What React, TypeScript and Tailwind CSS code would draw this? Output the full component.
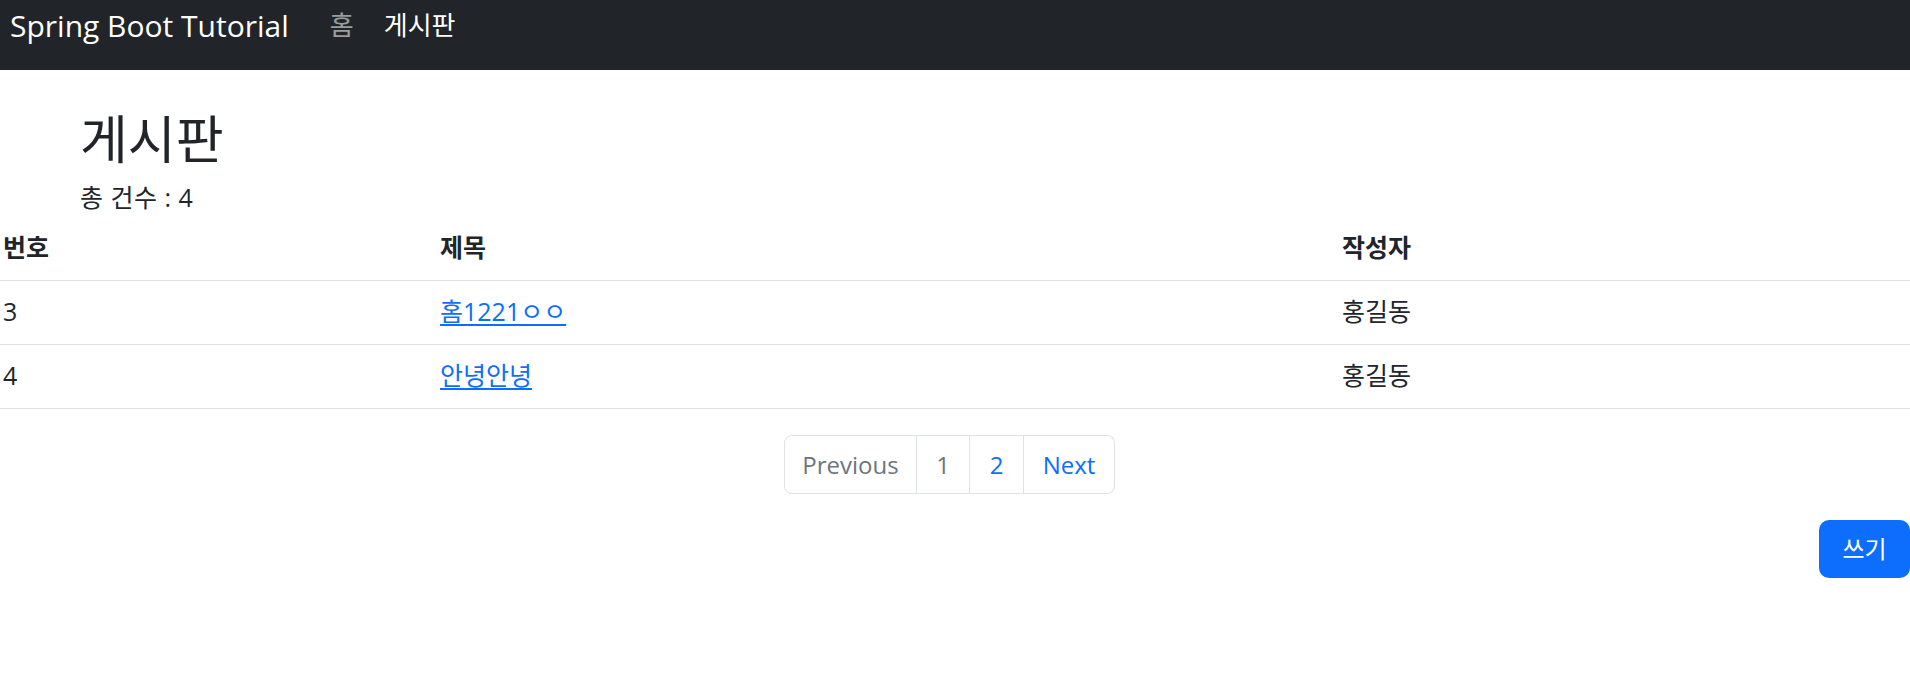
import React from 'react';

const posts = [
  { id: 3, title: '홈1221ㅇㅇ', author: '홍길동' },
  { id: 4, title: '안녕안녕', author: '홍길동' },
];

export default function App() {
  return (
    <div className="min-h-screen bg-white text-[#212529] font-['Open_Sans','Noto_Sans_CJK_KR',sans-serif]">
      {/* Navbar */}
      <nav className="h-[70px] bg-[#212529] flex items-start pl-[10px] pt-[3px]">
        <a href="#" className="text-[30px] leading-[45px] text-white mr-[26px]">
          Spring Boot Tutorial
        </a>
        <a href="#" className="text-[26px] leading-[45px] px-[15px] text-white/55">홈</a>
        <a href="#" className="text-[26px] leading-[45px] px-[15px] text-white">게시판</a>
      </nav>

      <main>
        <div className="pl-[80px] pt-[39px]">
          <h1 className="text-[52px] leading-[60px] mb-[10px]">게시판</h1>
          <p className="text-[25px] leading-[37px] tracking-[0.5px]">총 건수 : 4</p>
        </div>

        {/* Board table */}
        <table className="w-full border-collapse text-[25px]">
          <thead>
            <tr className="h-[64px] border-b border-[#dee2e6]">
              <th className="w-[437px] pl-[3px] text-left font-bold">번호</th>
              <th className="w-[902px] pl-[3px] text-left font-bold">제목</th>
              <th className="pl-[3px] text-left font-bold">작성자</th>
            </tr>
          </thead>
          <tbody>
            {posts.map((p) => (
              <tr key={p.id} className="h-[64px] border-b border-[#dee2e6]">
                <td className="pl-[3px]">{p.id}</td>
                <td className="pl-[3px]">
                  <a href="#" className="text-[#0d6efd] underline underline-offset-[3px]">
                    {p.title}
                  </a>
                </td>
                <td className="pl-[3px]">{p.author}</td>
              </tr>
            ))}
          </tbody>
        </table>

        {/* Pagination */}
        <div className="flex justify-center mt-[26px] pr-[11px]">
          <ul className="flex text-[24px] leading-[37px]">
            <li className="w-[133px] h-[59px] flex items-center justify-center border border-[#dee2e6] rounded-l-[8px] text-[#6c757d]">
              Previous
            </li>
            <li className="w-[53px] h-[59px] flex items-center justify-center border border-l-0 border-[#dee2e6] text-[#6c757d]">
              1
            </li>
            <li className="w-[54px] h-[59px] flex items-center justify-center border border-l-0 border-[#dee2e6] text-[#0d6efd]">
              2
            </li>
            <li className="w-[91px] h-[59px] flex items-center justify-center border border-l-0 border-[#dee2e6] rounded-r-[8px] text-[#0d6efd]">
              Next
            </li>
          </ul>
        </div>

        {/* Write button */}
        <div className="flex justify-end mt-[26px]">
          <button className="w-[91px] h-[58px] bg-[#0d6efd] text-white text-[24px] rounded-[10px]">
            쓰기
          </button>
        </div>
      </main>
    </div>
  );
}
